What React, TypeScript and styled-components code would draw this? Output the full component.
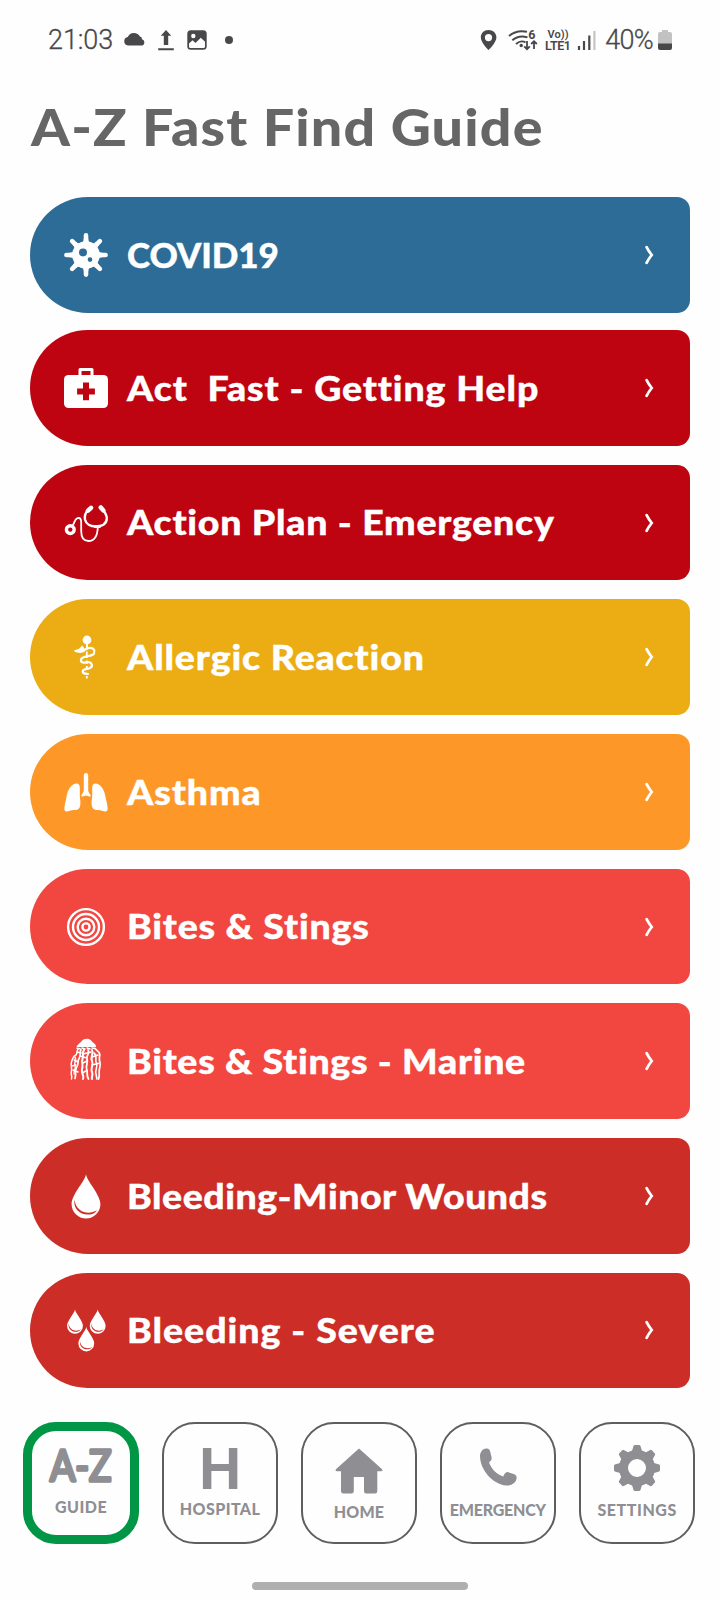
import React from "react";
import styled, { createGlobalStyle } from "styled-components";

const GlobalStyle = createGlobalStyle`
  * { box-sizing: border-box; }
  body { margin: 0; background: #fefefe; }
`;

const Screen = styled.main`
  width: 720px;
  height: 1600px;
  display: flex;
  flex-direction: column;
  overflow: hidden;
  background: #fefefe;
  font-family: Lato, "Open Sans", sans-serif;
  font-variant-ligatures: none;
`;

const StatusBar = styled.header`
  height: 80px;
  padding: 0 47px 0 48px;
  display: flex;
  align-items: center;
  justify-content: space-between;
  color: #48484a;
`;

const StatusGroup = styled.div`
  display: flex;
  align-items: center;
`;

const StatusText = styled.span<{ $spacing?: number; $left?: number }>`
  margin-left: ${(p) => p.$left ?? 0}px;
  font: 300 27px/32px Roboto, sans-serif;
  letter-spacing: ${(p) => p.$spacing ?? 0}px;
  -webkit-text-stroke: 0.3px currentColor;
`;

const StatusGlyph = styled.svg<{ $left: number }>`
  display: block;
  flex: none;
  overflow: visible;
  margin-left: ${(p) => p.$left}px;
`;

const Title = styled.h1`
  margin: 16px 0 0 31px;
  height: 101.2px;
  font-size: 50.5px;
  line-height: 62px;
  font-weight: 900;
  color: #666666;
  white-space: nowrap;
`;

const TitleText = styled.span`
  display: inline-block;
  letter-spacing: 1.03px;
  transform: scaleX(1.1);
  transform-origin: left center;
`;

const List = styled.nav`
  display: flex;
  flex-direction: column;
  gap: 18.87px;
  padding: 0 30px 0 30.3px;
`;

const Row = styled.a<{ $color: string; $tight?: boolean }>`
  height: 115.8px;
  display: flex;
  align-items: center;
  padding: 0 35.2px 0 33.7px;
  margin-bottom: ${(p) => (p.$tight ? -1.87 : 0)}px;
  border-radius: 58px 13px 13px 58px;
  background: ${(p) => p.$color};
  color: #ffffff;
`;

const RowIcon = styled.svg`
  width: 44px;
  height: 44px;
  flex: none;
  overflow: visible;
`;

const RowLabel = styled.span<{ $spacing: number; $stretch: number }>`
  margin: 0 0 2.4px 19px;
  font-size: 35px;
  line-height: 44px;
  font-weight: 900;
  letter-spacing: ${(p) => p.$spacing}px;
  transform: scaleX(${(p) => p.$stretch});
  transform-origin: left center;
  -webkit-text-stroke: 0.4px currentColor;
  white-space: pre;
`;

const Chevron = styled.svg`
  width: 12px;
  height: 20px;
  margin-left: auto;
`;

const TabBar = styled.footer`
  display: flex;
  gap: 22.85px;
  margin-top: 33.5px;
  padding-left: 22.7px;
`;

const Tab = styled.button<{ $active?: boolean }>`
  width: 116.2px;
  height: 122px;
  padding: 0;
  display: flex;
  flex-direction: column;
  align-items: center;
  flex: none;
  background: #fefefe;
  border: ${(p) => (p.$active ? "9.3px solid #009645" : "2px solid #5e5e60")};
  border-radius: 33px;
  color: #8e8e93;
`;

const TabIcon = styled.svg<{ $top: number }>`
  display: block;
  flex: none;
  overflow: visible;
  margin-top: ${(p) => p.$top}px;
`;

const TabLabel = styled.span<{ $spacing: number; $top: number }>`
  margin-top: ${(p) => p.$top}px;
  font: 900 16px/20px Lato, sans-serif;
  letter-spacing: ${(p) => p.$spacing}px;
  margin-right: ${(p) => -p.$spacing}px;
`;

const HomeIndicator = styled.div`
  width: 216px;
  height: 8px;
  margin: 38.3px auto 0;
  border-radius: 4px;
  background: #afafaf;
`;

const VirusIcon = () => (
  <RowIcon viewBox="0 0 44 44" fill="#fff" stroke="#fff">
    <circle cx="22" cy="22" r="13.8" stroke="none" />
    {[0, 45, 90, 135, 180, 225, 270, 315].map((a) => (
      <g key={a} transform={`rotate(${a} 22 22)`}>
        <path d="M22 2.4V12" strokeWidth="4.6" strokeLinecap="round" />
        <path d="M16.5 10.8Q19.8 9.8 19.8 5.5H24.2Q24.2 9.8 27.5 10.8Z" stroke="none" />
      </g>
    ))}
    <circle cx="19" cy="19.4" r="4" fill="#2d6c97" stroke="none" />
    <circle cx="26" cy="26.6" r="2.3" fill="#2d6c97" stroke="none" />
  </RowIcon>
);

const FirstAidIcon = () => (
  <RowIcon viewBox="0 0 44 44">
    <path d="M16 10V3.5H28V10" fill="none" stroke="#fff" strokeWidth="3" strokeLinejoin="round" />
    <rect x="0" y="9" width="44" height="33" rx="4.5" fill="#fff" />
    <path d="M22 16.5V34.3M13.1 25.4H30.9" stroke="#bf0411" strokeWidth="6" />
  </RowIcon>
);

const StethoscopeIcon = () => (
  <RowIcon viewBox="0 0 44 44" fill="none" stroke="#fff" strokeLinecap="round">
    <circle cx="6.3" cy="28.6" r="3.9" strokeWidth="3.4" />
    <path d="M8.7 24.5C11 21 10.5 18.2 13.5 17.2C16.5 16.4 17.3 18.4 17.2 22V30C17.2 36.5 19.5 40 24.5 40C30 40 33.5 35.5 33.8 26" strokeWidth="1.8" />
    <path d="M25 8.5C21.5 11 20.5 15 21 18.5C22 23 26.5 25.4 31.5 25.4C38 25.4 42.5 23.5 42.8 17.5C42.8 13.5 40.5 10.5 38.3 8.3" strokeWidth="2.4" />
    <path d="M24 9.6L27 6.8M39.3 9.4L36.8 6.5" strokeWidth="4.5" />
    <path d="M31 25.5H35.5" strokeWidth="3" />
  </RowIcon>
);

const SnakeStaffIcon = () => (
  <RowIcon viewBox="0 0 44 44" fill="none" stroke="#fff">
    <circle cx="23" cy="5" r="4.4" fill="#fff" stroke="none" />
    <path d="M23 9V14M22.8 16.5V23M22.8 25.5V29M22.8 31V34M22.8 41V43.5" strokeWidth="1.8" />
    <path d="M10 15.6L15 13.7L18.2 10.6L20.5 13.5V17L16 18L11 16.9Z" fill="#fff" stroke="none" />
    <path d="M19 15.2C22 15.2 23 12.5 26.5 12.8C30.2 13.2 31 16 30 18.5C28.5 22 18 20.2 17 24.5C16.6 28 20 28 23 27.3C28 26.6 29.5 31 26 33C23 34.3 19 33.5 18.7 36.5C18.6 39 22 38.8 24 39" strokeWidth="2.2" strokeLinecap="round" />
  </RowIcon>
);

const LungsIcon = () => (
  <RowIcon viewBox="0 0 44 44" fill="#fff">
    <path d="M19.8 5.3a2.2 2.2 0 0 1 4.4 0V20C24.2 23 26.5 23.6 26.7 26.2C25 27.4 23.6 25.6 22 25.6C20.4 25.6 19 27.4 17.3 26.2C17.5 23.6 19.8 23 19.8 20Z" />
    <path d="M12.5 13.5C15 13.6 15.8 15.3 15.8 18V26C15.8 28.5 16.8 31 16.3 34.5C16 38.5 14 40.2 10 40C6.5 40 5 41.5 2.7 41.5C.3 41.4 .2 39.5 .5 37C1 32.5 2 30 2.5 27C3.3 20 7.5 13.6 12.5 13.5Z" />
    <path d="M31.5 13.5C29 13.6 28.2 15.3 28.2 18V26C28.2 28.5 27.2 31 27.7 34.5C28 38.5 30 40.2 34 40C37.5 40 39 41.5 41.3 41.5C43.7 41.4 43.8 39.5 43.5 37C43 32.5 42 30 41.5 27C40.7 20 36.5 13.6 31.5 13.5Z" />
  </RowIcon>
);

const TargetIcon = () => (
  <RowIcon viewBox="0 0 44 44" fill="none" stroke="#fff" strokeWidth="2.4">
    <circle cx="22" cy="22" r="17.9" />
    <circle cx="22" cy="22" r="13" />
    <circle cx="22" cy="22" r="8.3" />
    <circle cx="22" cy="22" r="3.6" />
  </RowIcon>
);

const JellyfishIcon = () => (
  <RowIcon viewBox="0 0 44 44" fill="none" stroke="#fff" strokeLinecap="round" strokeLinejoin="round">
    <path d="M12.5 8C13 5.5 15.5 4.6 17 3C18.5.8 20.5-.3 23-.2C26-.2 27.5 2 29 3.4C30.5 4.6 32 5.5 32.2 8Z" fill="#fff" stroke="none" />
    <path d="M13 9.3L16 9.8M18 9L21 10M23 9L26 10M28 9L31.5 9.5" strokeWidth="1.4" />
    <path d="M14 10C12.8 12 13.5 14 12 16C9 17 8.5 20 7.5 23C6.3 27 8.5 29 7.3 33C6.8 36 8.5 37.5 7.5 40" strokeWidth="1.5" />
    <path d="M17 10.5C15 14 17.5 16 15.3 19C13 22 15 25 12.8 28C10.5 31 12.5 35 11 39.5" strokeWidth="1.7" />
    <path d="M11 18C13 21 9.5 24 11 27C12.5 30 9 32 10.2 35M10 21L14 23M8 27L12 26M9 31L14 33" strokeWidth="1.4" />
    <path d="M20 11C17.5 14 20 17 18.5 20C17 23.5 19.8 26 18 30C16.7 34 21 37 19 40" strokeWidth="2" />
    <path d="M24 11C26.5 14 21.5 17 23 20C24.5 24 21.5 26 22.7 30C24 34 22 36 24.5 40" strokeWidth="1.8" />
    <path d="M28 11C30.5 15 25.5 18 28 22C30 26 26 29 28 33C29.5 36 27 38 28 40" strokeWidth="2" />
    <path d="M31.5 10C34.5 13 36.7 14 35.5 18C34.5 22 37.5 25 35.7 29C34 33 36.5 36 34.5 40" strokeWidth="1.7" />
    <path d="M30 14C34 17 30.5 20 32.3 24C34.5 28 30.5 31 32 35L33 40M19 15L27 13M16 17L23 19M19 24L23 22M28 26L36 24M18 34L22 32M13 13L17 14M28 18L34 16" strokeWidth="1.6" />
  </RowIcon>
);

const DropShape = () => (
  <>
    <path d="M22 .2C23.2 7.5 36.4 20.5 36.4 30A14.4 14.4 0 0 1 7.6 30C7.6 20.5 20.8 7.5 22 .2Z" fill="#fff" />
    <path d="M10.6 25.5C8.5 35 17.5 42.5 27.5 40.2C30 39.5 31.8 38.2 33 36.3C27.5 39.5 20.5 39.4 16 36C12.5 33.2 11 30 10.6 25.5Z" fill="#cc2d26" />
  </>
);

const DropIcon = () => (
  <RowIcon viewBox="0 0 44 44">
    <DropShape />
  </RowIcon>
);

const DropsIcon = () => (
  <RowIcon viewBox="0 0 44 44">
    <g transform="translate(-1.1 1.4) scale(.55)"><DropShape /></g>
    <g transform="translate(21.6 1.4) scale(.55)"><DropShape /></g>
    <g transform="translate(10.2 19) scale(.55)"><DropShape /></g>
  </RowIcon>
);

const topics = [
  { label: "COVID19", color: "#2d6c97", Icon: VirusIcon, spacing: -0.1, stretch: 1 },
  { label: "Act  Fast - Getting Help", color: "#bf0411", Icon: FirstAidIcon, spacing: 0.85, stretch: 1.07 },
  { label: "Action Plan - Emergency", color: "#bf0411", Icon: StethoscopeIcon, spacing: 0.7, stretch: 1.07 },
  { label: "Allergic Reaction", color: "#ecac13", Icon: SnakeStaffIcon, spacing: 0.8, stretch: 1.07 },
  { label: "Asthma", color: "#fd9828", Icon: LungsIcon, spacing: 0.87, stretch: 1.07 },
  { label: "Bites & Stings", color: "#f24740", Icon: TargetIcon, spacing: 0.75, stretch: 1.07 },
  { label: "Bites & Stings - Marine", color: "#f24740", Icon: JellyfishIcon, spacing: 0.66, stretch: 1.07 },
  { label: "Bleeding-Minor Wounds", color: "#cc2d26", Icon: DropIcon, spacing: 0.48, stretch: 1.07 },
  { label: "Bleeding - Severe", color: "#cc2d26", Icon: DropsIcon, spacing: 0.93, stretch: 1.07 },
];

const StatusIcons = () => (
  <StatusGroup>
    <StatusGlyph $left={0} width="18" height="22" viewBox="0 0 18 22">
      <path fillRule="evenodd" d="M8.5 1C4 1 .8 4.2 .8 8.4C.8 13.5 8.5 21 8.5 21S16.4 13.5 16.4 8.4C16.4 4.2 13 1 8.5 1ZM8.5 5A3.6 3.6 0 1 1 8.5 12.2A3.6 3.6 0 0 1 8.5 5Z" fill="currentColor" />
    </StatusGlyph>
    <StatusGlyph $left={9.5} width="30" height="22" viewBox="0 0 30 22" fill="none" stroke="currentColor" strokeWidth="1.9">
      <path d="M1 7Q8.5.7 19 2.8M4.3 11.2Q11 5.5 19.5 8.4M8 15Q12.8 10.8 17.5 13.3" />
      <circle cx="13.2" cy="16.5" r="1.7" fill="currentColor" stroke="none" />
      <path d="M19 12V20M16.2 17.4L19 20.2L21.8 17.4M26 20V12.3M23.2 15L26 12.2L28.8 15" strokeWidth="1.8" />
      <text x="20.3" y="10.2" fontFamily="Roboto, sans-serif" fontWeight="700" fontSize="12.5" fill="currentColor" stroke="none">6</text>
    </StatusGlyph>
    <StatusGlyph $left={6.5} width="30" height="22" viewBox="0 0 30 22" fill="currentColor" fontFamily="Roboto, sans-serif" fontWeight="600">
      <text x="3.5" y="9.2" fontSize="11" textLength="21">Vo))</text>
      <text x="1" y="21.4" fontSize="12.5" textLength="26">LTE1</text>
    </StatusGlyph>
    <StatusGlyph $left={2.5} width="20" height="22" viewBox="0 0 20 22" strokeWidth="2.2" stroke="currentColor">
      <path d="M2 17V21M7 12V21M12.3 6.5V21" />
      <path d="M17.4 2V21" stroke="#c4c4c4" />
    </StatusGlyph>
    <StatusText $left={8.5} $spacing={-0.7}>40%</StatusText>
    <StatusGlyph $left={4} width="16" height="22" viewBox="0 0 16 22">
      <path d="M5 1h6v2h2a2 2 0 0 1 2 2V15H1V5a2 2 0 0 1 2-2h2Z" fill="#c2c2c2" />
      <path d="M1 14.5H15V19a2 2 0 0 1-2 2H3a2 2 0 0 1-2-2Z" fill="currentColor" />
    </StatusGlyph>
  </StatusGroup>
);

export default function App() {
  return (
    <Screen>
      <GlobalStyle />
      <StatusBar>
        <StatusGroup>
          <StatusText $spacing={-0.1}>21:03</StatusText>
          <StatusGlyph $left={9.5} width="24" height="22" viewBox="0 0 24 22">
            <path d="M5 16.5A4.3 4.3 0 0 1 4.8 8A6.8 6.8 0 0 1 16.9 7.6A2.5 2.5 0 0 1 19 10.2A3.4 3.4 0 0 1 19.5 16.5Z" fill="currentColor" />
          </StatusGlyph>
          <StatusGlyph $left={11} width="16" height="22" viewBox="0 0 16 22">
            <path d="M8 1L13.3 6.8H10.2V16H5.8V6.8H2.7ZM.2 19.3H15.8V21.2H.2Z" fill="currentColor" />
          </StatusGlyph>
          <StatusGlyph $left={13} width="20" height="22" viewBox="0 0 20 22">
            <rect x=".3" y="1.3" width="19.4" height="19.4" rx="3.5" fill="currentColor" />
            <circle cx="6.3" cy="7" r="2.2" fill="#fefefe" />
            <path d="M2 14.5L5.5 11.3L8.5 14L13.8 8.8L18 12.8V17.5Q18 19 16.5 19H3.5Q2 19 2 17.5Z" fill="#fefefe" />
          </StatusGlyph>
          <StatusGlyph $left={17} width="10" height="22" viewBox="0 0 10 22">
            <circle cx="5" cy="11" r="4" fill="currentColor" />
          </StatusGlyph>
        </StatusGroup>
        <StatusIcons />
      </StatusBar>

      <Title><TitleText>A-Z Fast Find Guide</TitleText></Title>

      <List>
        {topics.map(({ label, color, Icon, spacing, stretch }, i) => (
          <Row key={label} $color={color} $tight={i === 0}>
            <Icon />
            <RowLabel $spacing={spacing} $stretch={stretch}>{label}</RowLabel>
            <Chevron viewBox="0 0 12 20">
              <path d="M3.6 2.2Q5.5 6 8.7 10Q5.5 14 3.6 17.8" fill="none" stroke="#fff" strokeWidth="2.8" strokeLinecap="round" />
            </Chevron>
          </Row>
        ))}
      </List>

      <TabBar>
        <Tab $active>
          <TabIcon $top={17} width="66" height="36" viewBox="0 0 66 36">
            <text x="2" y="33.2" textLength="61.5" lengthAdjust="spacingAndGlyphs" fontFamily="Lato, sans-serif" fontWeight="400" fontSize="43" fill="currentColor" stroke="currentColor" strokeWidth="3.4" strokeLinejoin="round" strokeLinecap="round">A-Z</text>
          </TabIcon>
          <TabLabel $spacing={0.5} $top={13}>GUIDE</TabLabel>
        </Tab>
        <Tab>
          <TabIcon $top={24} width="36" height="41" viewBox="0 0 36 41">
            <text x="18" y="40.5" textAnchor="middle" fontFamily="Liberation Sans, sans-serif" fontWeight="700" fontSize="58.5" fill="currentColor">H</text>
          </TabIcon>
          <TabLabel $spacing={0.4} $top={10}>HOSPITAL</TabLabel>
        </Tab>
        <Tab>
          <TabIcon $top={24} width="48" height="46" viewBox="0 0 48 46">
            <path d="M24 .5L46.8 21Q48.5 23.2 46 23.2H42.3V43Q42.3 45.5 40 45.5H31.3Q29 45.5 29 43V29H18.8V43Q18.8 45.5 16.5 45.5H8.3Q6 45.5 6 43V23.2H2Q-.5 23.2 1.2 21Z" fill="currentColor" />
          </TabIcon>
          <TabLabel $spacing={0.2} $top={8.3}>HOME</TabLabel>
        </Tab>
        <Tab>
          <TabIcon $top={24} width="38" height="38" viewBox="0 0 38 38">
            <path d="M1 8C1.2 4.5 3.2 1 7.2.6C10 .4 11 2 11.5 5L12.6 9.5C13 12 11.5 13.3 10 14.3C12 20.5 17.5 26.5 24.3 28.5C25 26.5 26.3 24 28.7 24.1L34.7 26C37.5 27 38 28.7 37.4 31C36.3 35.5 32 37.7 27.5 37.5C13.5 36.5 1 21.5 1 8Z" fill="currentColor" />
          </TabIcon>
          <TabLabel $spacing={-0.2} $top={14}>EMERGENCY</TabLabel>
        </Tab>
        <Tab>
          <TabIcon $top={21} width="46" height="46" viewBox="0 0 46 46">
            <circle cx="23" cy="23" r="13.5" fill="none" stroke="currentColor" strokeWidth="9" />
            {[0, 45, 90, 135, 180, 225, 270, 315].map((a) => (
              <path key={a} transform={`rotate(${a} 23 23)`} d="M19.6 .8Q20 0 21 0H25Q26 0 26.4 .8L28 6L29.5 8H16.5L18 6Z" fill="currentColor" />
            ))}
          </TabIcon>
          <TabLabel $spacing={0.55} $top={9.5}>SETTINGS</TabLabel>
        </Tab>
      </TabBar>
      <HomeIndicator />
    </Screen>
  );
}
